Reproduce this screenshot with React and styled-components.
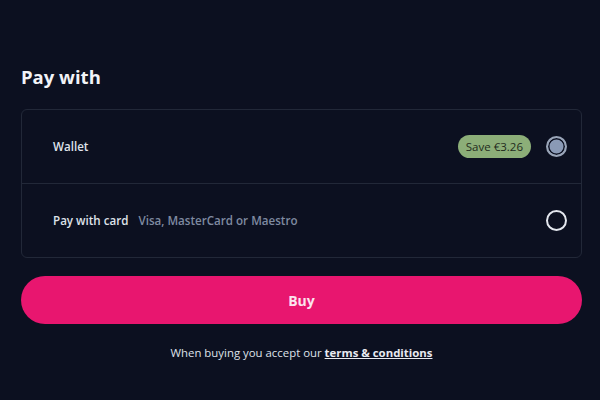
import React from 'react';
import styled, { createGlobalStyle } from 'styled-components';

const GlobalStyle = createGlobalStyle`
  html, body {
    margin: 0;
    padding: 0;
    background: #0c1020;
  }
  body {
    font-family: "Open Sans", "Liberation Sans", sans-serif;
    color: #e8eaf0;
  }
`;

const Page = styled.div`
  width: 600px;
  height: 400px;
  box-sizing: border-box;
  padding: 63px 18px 0 21px;
  background: #0c1020;
`;

const Title = styled.h2`
  margin: 0 0 19px;
  font-size: 18.5px;
  font-weight: 700;
  line-height: 27px;
  color: #f2f3f7;
`;

const Options = styled.div`
  border: 1px solid #222838;
  border-radius: 6px;
  overflow: hidden;
`;

const Option = styled.label`
  display: flex;
  align-items: center;
  height: 73px;
  padding: 0 14px 0 31px;
  gap: 15px;
  cursor: pointer;

  & + & {
    border-top: 1px solid #222838;
  }
`;

const OptionName = styled.span`
  font-size: 11.6px;
  font-weight: 600;
  color: #dfe2ea;
`;

const OptionHint = styled.span`
  font-size: 11.6px;
  font-weight: 600;
  color: #7f8aa0;
  margin-left: -5px;
`;

const Spacer = styled.div`
  flex: 1;
`;

const Badge = styled.span`
  display: inline-flex;
  align-items: center;
  height: 23px;
  padding: 0 8px;
  border-radius: 12px;
  background: #8cae78;
  color: #1f2b1c;
  font-size: 11.5px;
  font-weight: 500;
`;

const Radio = styled.span`
  width: 21px;
  height: 21px;
  box-sizing: border-box;
  border-radius: 50%;
  border: 2px solid ${p => (p.checked ? '#9aa5b8' : '#e4e7ee')};
  background: ${p => (p.checked ? '#8a9ab6' : 'transparent')};
  box-shadow: ${p => (p.checked ? 'inset 0 0 0 1.5px #0c1020' : 'none')};
  flex-shrink: 0;
`;

const BuyButton = styled.button`
  display: block;
  width: 100%;
  height: 48px;
  margin-top: 18px;
  border: none;
  border-radius: 24px;
  background: #e8166f;
  color: #fbe3ee;
  font-family: inherit;
  font-size: 14px;
  font-weight: 700;
  cursor: pointer;
`;

const Terms = styled.p`
  margin: 21px 0 0;
  text-align: center;
  font-size: 11.4px;
  color: #dfe2ea;

  a {
    color: #e8eaf0;
    font-weight: 700;
    text-decoration: underline;
  }
`;

const App = () => {
  return (
    <>
      <GlobalStyle />
      <Page>
        <Title>Pay with</Title>
        <Options>
          <Option>
            <OptionName>Wallet</OptionName>
            <Spacer />
            <Badge>Save €3.26</Badge>
            <Radio checked />
          </Option>
          <Option>
            <OptionName>Pay with card</OptionName>
            <OptionHint>Visa, MasterCard or Maestro</OptionHint>
            <Spacer />
            <Radio />
          </Option>
        </Options>
        <BuyButton>Buy</BuyButton>
        <Terms>
          When buying you accept our <a href="#terms">terms &amp; conditions</a>
        </Terms>
      </Page>
    </>
  );
};

export default App;
